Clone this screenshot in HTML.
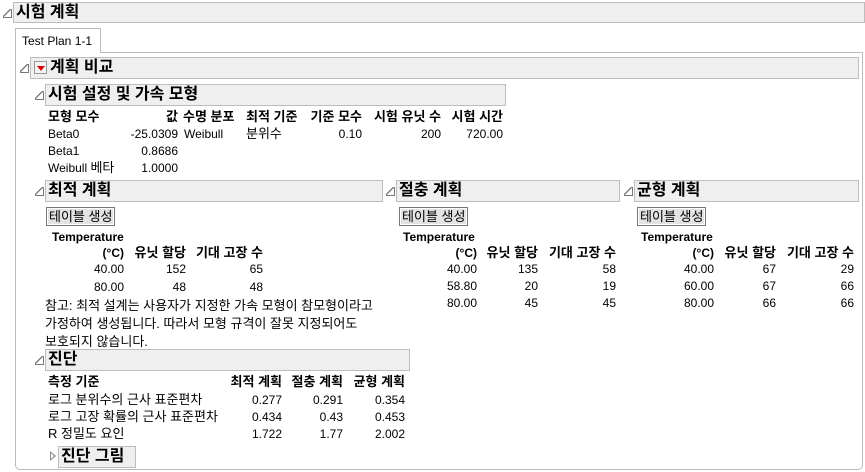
<!DOCTYPE html><html><head><meta charset="utf-8"><style>
*{margin:0;padding:0;box-sizing:border-box}
body{width:865px;height:472px;background:#fff;position:relative;overflow:hidden;font-family:"Liberation Sans","Noto Sans CJK KR",sans-serif;font-size:12px;color:#000}
.a{position:absolute;white-space:nowrap;line-height:16px}
.k{font-size:13px}
.r{text-align:right}
.b{font-weight:bold}
.h{position:absolute;background:#efefef;border:1px solid #bdbdbd;font-weight:bold;font-size:16px;line-height:20px;padding-left:2px;white-space:nowrap}
.t{position:absolute;width:0;height:0}
.t:before{content:"";position:absolute;left:0;top:0;width:8px;height:8px;background:linear-gradient(to top left,transparent 45%,#777 46%,#777 56%,transparent 57%);border-bottom:1px solid #777;border-right:1px solid #777}
.btn{position:absolute;background:#e3e3e3;border:1px solid #777;box-shadow:inset 0 0 0 1px #fff;font-size:13px;line-height:17px;padding:0 2px}
</style></head><body>
<div class="h" style="left:13px;top:2px;width:852px;height:21px;font-size:16px;line-height:19px">시험 계획</div>
<div class="t" style="left:3px;top:9px"></div>
<div style="position:absolute;left:15px;top:52px;width:848px;height:418px;border:1px solid #bbb;border-radius:0 0 5px 5px"></div>
<div style="position:absolute;left:15px;top:28px;width:86px;height:25px;border:1px solid #bbb;border-bottom:none;background:#fff;font-size:12px;line-height:24px;padding-left:6px">Test Plan 1-1</div>

<div class="h" style="left:30px;top:57px;width:829px;height:22px;padding-left:19px">계획 비교</div>
<div class="t" style="left:20px;top:64px"></div>
<div style="position:absolute;left:34px;top:61px;width:13px;height:13px;border:1px solid #999;background:#f4f4f4"><div style="position:absolute;left:2px;top:4px;border-left:4px solid transparent;border-right:4px solid transparent;border-top:5px solid #d00"></div></div>

<div class="h" style="left:45px;top:84px;width:461px;height:22px">시험 설정 및 가속 모형</div>
<div class="t" style="left:35px;top:91px"></div>
<div class="a b k" style="left:48px;top:109px">모형 모수</div>
<div class="a b r k" style="left:130px;top:109px;width:48px">값</div>
<div class="a b k" style="left:183px;top:109px">수명 분포</div>
<div class="a b k" style="left:246px;top:109px">최적 기준</div>
<div class="a b r k" style="left:290px;top:109px;width:72px">기준 모수</div>
<div class="a b r k" style="left:350px;top:109px;width:91px">시험 유닛 수</div>
<div class="a b r k" style="left:430px;top:109px;width:73px">시험 시간</div>
<div class="a" style="left:48px;top:126px">Beta0</div>
<div class="a r" style="left:100px;top:126px;width:78px">-25.0309</div>
<div class="a" style="left:184px;top:126px">Weibull</div>
<div class="a k" style="left:246px;top:126px">분위수</div>
<div class="a r" style="left:300px;top:126px;width:62px">0.10</div>
<div class="a r" style="left:360px;top:126px;width:81px">200</div>
<div class="a r" style="left:440px;top:126px;width:63px">720.00</div>
<div class="a" style="left:48px;top:143px">Beta1</div>
<div class="a r" style="left:100px;top:143px;width:78px">0.8686</div>
<div class="a" style="left:48px;top:160px">Weibull <span class="k">베타</span></div>
<div class="a r" style="left:100px;top:160px;width:78px">1.0000</div>

<!-- 최적 -->
<div class="h" style="left:45px;top:180px;width:338px;height:22px">최적 계획</div>
<div class="t" style="left:35px;top:187px"></div>
<div class="btn" style="left:46px;top:207px">테이블 생성</div>
<div class="a b" style="left:52px;top:229px">Temperature</div>
<div class="a b r" style="left:60px;top:245px;width:64px">(°C)</div>
<div class="a b r k" style="left:116px;top:245px;width:70px">유닛 할당</div>
<div class="a b r k" style="left:176px;top:245px;width:87px">기대 고장 수</div>
<div class="a r" style="left:60px;top:261px;width:64px">40.00</div>
<div class="a r" style="left:126px;top:261px;width:60px">152</div>
<div class="a r" style="left:186px;top:261px;width:77px">65</div>
<div class="a r" style="left:60px;top:279px;width:64px">80.00</div>
<div class="a r" style="left:126px;top:279px;width:60px">48</div>
<div class="a r" style="left:186px;top:279px;width:77px">48</div>
<div class="a k" style="left:45px;top:297px;line-height:18px">참고: 최적 설계는 사용자가 지정한 가속 모형이 참모형이라고<br>가정하여 생성됩니다. 따라서 모형 규격이 잘못 지정되어도<br>보호되지 않습니다.</div>

<!-- 절충 -->
<div class="h" style="left:396px;top:180px;width:224px;height:22px">절충 계획</div>
<div class="t" style="left:386px;top:187px"></div>
<div class="btn" style="left:399px;top:207px">테이블 생성</div>
<div class="a b" style="left:403px;top:229px">Temperature</div>
<div class="a b r" style="left:413px;top:245px;width:64px">(°C)</div>
<div class="a b r k" style="left:468px;top:245px;width:70px">유닛 할당</div>
<div class="a b r k" style="left:529px;top:245px;width:87px">기대 고장 수</div>
<div class="a r" style="left:413px;top:261px;width:64px">40.00</div><div class="a r" style="left:478px;top:261px;width:60px">135</div><div class="a r" style="left:539px;top:261px;width:77px">58</div>
<div class="a r" style="left:413px;top:278px;width:64px">58.80</div><div class="a r" style="left:478px;top:278px;width:60px">20</div><div class="a r" style="left:539px;top:278px;width:77px">19</div>
<div class="a r" style="left:413px;top:295px;width:64px">80.00</div><div class="a r" style="left:478px;top:295px;width:60px">45</div><div class="a r" style="left:539px;top:295px;width:77px">45</div>

<!-- 균형 -->
<div class="h" style="left:634px;top:180px;width:225px;height:22px">균형 계획</div>
<div class="t" style="left:624px;top:187px"></div>
<div class="btn" style="left:637px;top:207px">테이블 생성</div>
<div class="a b" style="left:641px;top:229px">Temperature</div>
<div class="a b r" style="left:650px;top:245px;width:64px">(°C)</div>
<div class="a b r k" style="left:706px;top:245px;width:70px">유닛 할당</div>
<div class="a b r k" style="left:767px;top:245px;width:87px">기대 고장 수</div>
<div class="a r" style="left:650px;top:261px;width:64px">40.00</div><div class="a r" style="left:716px;top:261px;width:60px">67</div><div class="a r" style="left:777px;top:261px;width:77px">29</div>
<div class="a r" style="left:650px;top:278px;width:64px">60.00</div><div class="a r" style="left:716px;top:278px;width:60px">67</div><div class="a r" style="left:777px;top:278px;width:77px">66</div>
<div class="a r" style="left:650px;top:295px;width:64px">80.00</div><div class="a r" style="left:716px;top:295px;width:60px">66</div><div class="a r" style="left:777px;top:295px;width:77px">66</div>

<!-- 진단 -->
<div class="h" style="left:45px;top:349px;width:365px;height:22px">진단</div>
<div class="t" style="left:35px;top:356px"></div>
<div class="a b k" style="left:48px;top:374px">측정 기준</div>
<div class="a b r k" style="left:212px;top:374px;width:70px">최적 계획</div>
<div class="a b r k" style="left:273px;top:374px;width:70px">절충 계획</div>
<div class="a b r k" style="left:335px;top:374px;width:70px">균형 계획</div>
<div class="a k" style="left:48px;top:392px">로그 분위수의 근사 표준편차</div>
<div class="a r" style="left:222px;top:392px;width:60px">0.277</div><div class="a r" style="left:283px;top:392px;width:60px">0.291</div><div class="a r" style="left:345px;top:392px;width:60px">0.354</div>
<div class="a k" style="left:48px;top:409px">로그 고장 확률의 근사 표준편차</div>
<div class="a r" style="left:222px;top:409px;width:60px">0.434</div><div class="a r" style="left:283px;top:409px;width:60px">0.43</div><div class="a r" style="left:345px;top:409px;width:60px">0.453</div>
<div class="a k" style="left:48px;top:426px">R 정밀도 요인</div>
<div class="a r" style="left:222px;top:426px;width:60px">1.722</div><div class="a r" style="left:283px;top:426px;width:60px">1.77</div><div class="a r" style="left:345px;top:426px;width:60px">2.002</div>
<div class="h" style="left:58px;top:446px;width:78px;height:22px">진단 그림</div>
<div style="position:absolute;left:50px;top:451px;border-top:5px solid transparent;border-bottom:5px solid transparent;border-left:6px solid #888"></div>
<div style="position:absolute;left:51px;top:453px;border-top:3px solid transparent;border-bottom:3px solid transparent;border-left:3.5px solid #fff"></div>
</body></html>
